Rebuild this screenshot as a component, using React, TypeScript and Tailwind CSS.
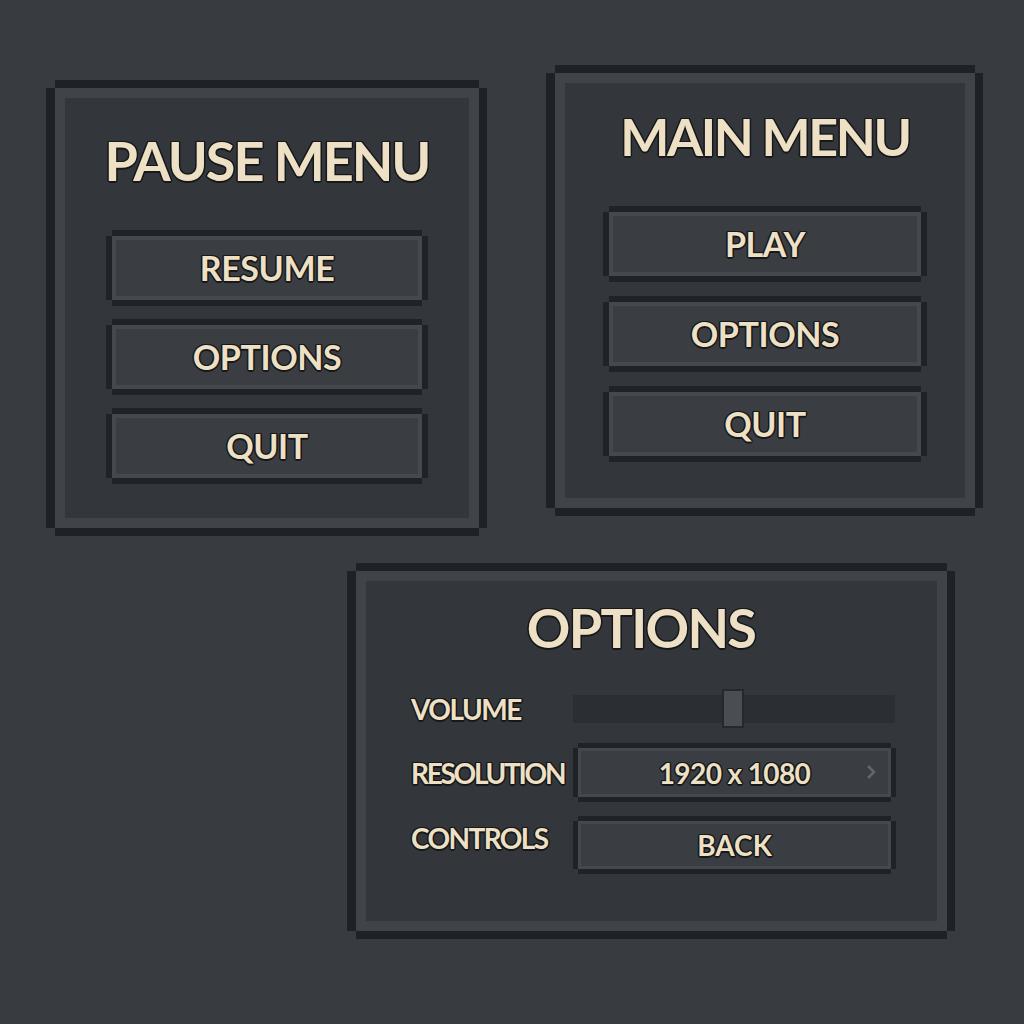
import React from "react";

const outline =
  "[text-shadow:1.5px_0_0_#16181b,-1.5px_0_0_#16181b,0_1.5px_0_#16181b,0_-1.5px_0_#16181b,1px_1px_0_#16181b,-1px_-1px_0_#16181b,1px_-1px_0_#16181b,-1px_1px_0_#16181b]";

function Panel({ className, children }: { className: string; children?: React.ReactNode }) {
  return (
    <div
      className={`border-[10px] border-[#404348] bg-[#33363b] shadow-[0_-8px_0_#1e2125,0_8px_0_#1e2125,-9px_0_0_#1e2125,8px_0_0_#1e2125] ${className}`}
    >
      {children}
    </div>
  );
}

function Button({ label, className = "" }: { label: string; className?: string }) {
  return (
    <div
      className={`flex h-[64px] items-center justify-center border-[4px] border-[#45484e] bg-[#3a3d42] shadow-[0_-6px_0_#1f2226,0_6px_0_#1f2226,-6px_0_0_#1f2226,6px_0_0_#1f2226] ${className}`}
    >
      <span className={`text-[34px] font-bold leading-none tracking-[-0.4px] text-[#eee0c4] ${outline}`}>{label}</span>
    </div>
  );
}

function Title({ children, className = "" }: { children: React.ReactNode; className?: string }) {
  return (
    <div className={`text-center font-bold leading-none text-[#eee0c4] ${outline} ${className}`}>
      {children}
    </div>
  );
}

const label = `text-[28px] font-bold leading-none text-[#eee0c4] ${outline}`;

export default function App() {
  return (
    <div
      className="h-[1024px] w-[1024px] overflow-hidden bg-[#383b40]"
      style={{ fontFamily: "Lato, 'Open Sans', sans-serif" }}
    >
      <div className="flex items-start pl-[55px] pt-[73px]">
        <Panel className="mt-[15px] h-[440px] w-[424px]">
          <Title className="pt-[36px] text-[54px] tracking-[-2px]">PAUSE MENU</Title>
          <div className="mt-[48px] flex flex-col items-center gap-[25px]">
            <Button label="RESUME" className="w-[310px]" />
            <Button label="OPTIONS" className="w-[310px]" />
            <Button label="QUIT" className="w-[310px]" />
          </div>
        </Panel>
        <Panel className="ml-[76px] h-[435px] w-[420px]">
          <Title className="pt-[27px] text-[52px] tracking-[-2.4px]">MAIN MENU</Title>
          <div className="mt-[50px] flex flex-col items-center gap-[26px]">
            <Button label="PLAY" className="w-[312px]" />
            <Button label="OPTIONS" className="w-[312px]" />
            <Button label="QUIT" className="w-[312px]" />
          </div>
        </Panel>
      </div>

      <Panel className="ml-[356px] mt-[43px] h-[360px] w-[591px]">
        <Title className="pr-[21px] pt-[20px] text-[54px] tracking-[-1.7px]">OPTIONS</Title>
        <div className="pl-[45px]">
          <div className="mt-[34px] flex h-[40px] items-center">
            <div className={`w-[162px] tracking-[-1.5px] ${label}`}>VOLUME</div>
            <div className="relative h-[28px] w-[322px] bg-[#2b2e32]">
              <div className="absolute left-[149px] top-[-6px] h-[39px] w-[22px] border-2 border-[#25282c] bg-[#4a4d52]" />
            </div>
          </div>
          <div className="mt-[19px] flex h-[49px] items-center">
            <div className={`w-[167px] tracking-[-2.3px] ${label}`}>RESOLUTION</div>
            <div className="relative flex h-[49px] w-[313px] items-center justify-center border-[3px] border-[#45484e] bg-[#3a3d42] shadow-[0_-5px_0_#1f2226,0_5px_0_#1f2226,-5px_0_0_#1f2226,5px_0_0_#1f2226]">
              <span className={`text-[28px] font-bold leading-none tracking-[-0.6px] text-[#eee0c4] ${outline}`}>1920 x 1080</span>
              <svg className="absolute right-[12px] top-[14px]" width="10" height="14" viewBox="0 0 10 14">
                <path d="M2 1 L8 7 L2 13" fill="none" stroke="#62666b" strokeWidth="2.5" />
              </svg>
            </div>
          </div>
          <div className="mt-[24px] flex h-[48px] items-center">
            <div className={`mb-[14px] w-[167px] tracking-[-1.6px] ${label}`}>CONTROLS</div>
            <div className="flex h-[48px] w-[313px] items-center justify-center border-[3px] border-[#45484e] bg-[#3a3d42] shadow-[0_-5px_0_#1f2226,0_5px_0_#1f2226,-5px_0_0_#1f2226,5px_0_0_#1f2226]">
              <span className={`text-[28px] font-bold leading-none text-[#eee0c4] ${outline}`}>BACK</span>
            </div>
          </div>
        </div>
      </Panel>
    </div>
  );
}
